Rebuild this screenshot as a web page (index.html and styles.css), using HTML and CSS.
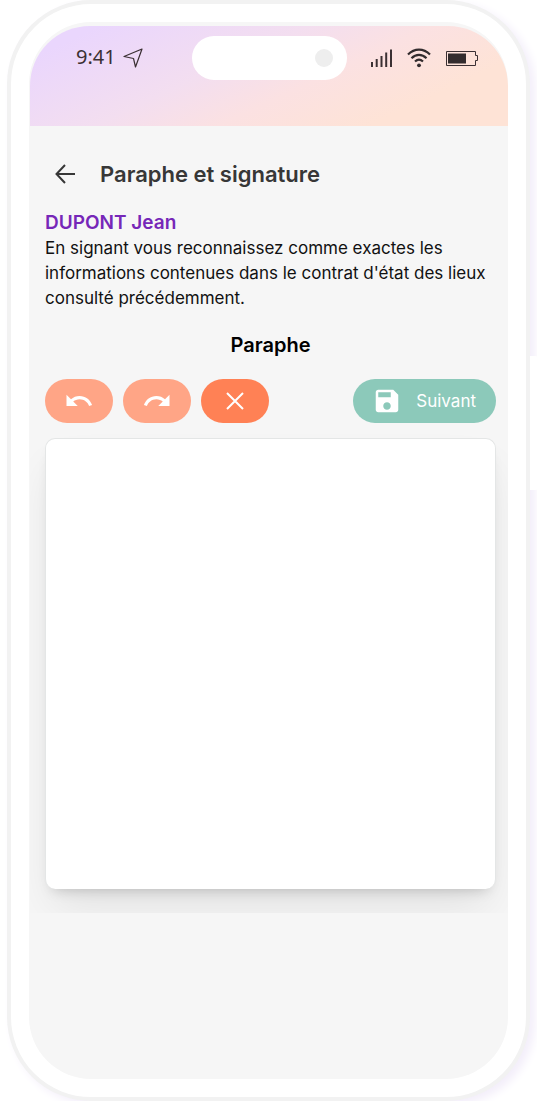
FILE: index.html
```html
<!DOCTYPE html>
<html lang="fr">

<head>
    <meta charset="UTF-8">
    <meta name="viewport" content="width=device-width, initial-scale=1.0">
    <title>Paraphe et signature</title>
    <link rel="stylesheet" href="styles.css">
</head>

<body>
    <div class="phone">
        <div class="side-key"></div>
        <div class="screen">
            <header class="status-bar">
                <div class="status-left">
                    <span class="time">9:41</span>
                    <svg width="20" height="20" viewBox="0 0 20 20" fill="none" stroke="#3b3033" stroke-width="1.2" stroke-linejoin="round">
                        <path d="M1 8.500 19 1 12.500 19 10.500 10.500Z" />
                    </svg>
                </div>
                <div class="island">
                    <div class="camera"></div>
                </div>
                <div class="status-right">
                    <svg width="22" height="20" viewBox="0 0 22 20" fill="#3b3033">
                        <path d="M0 14h2v5H0zM4.700 11h2v8h-2zM9.500 8h2v11h-2zM14.200 4.500h2V19h-2zM19 1.500h2V19h-2z" />
                    </svg>
                    <svg width="24" height="20" viewBox="0 0 24 20" fill="none" stroke="#332c2e" stroke-width="2.200">
                        <path d="M1 6.500C7.500 0 16.500 0 23 6.500M4.500 10.200c4.500-4.400 10.500-4.400 15 0M8 13.500c2.500-2.300 5.500-2.300 8 0" />
                        <circle cx="12" cy="17.300" r="1.900" fill="#332c2e" stroke="none" />
                    </svg>
                    <svg width="34" height="20" viewBox="0 0 34 20" fill="none" stroke="#3b3033">
                        <path d="M1.500 3.500h29v4h2v5h-2v5h-29z" />
                        <path d="M3 5.500h18v10H3z" fill="#332c2e" stroke="none" />
                    </svg>
                </div>
            </header>

            <main class="content">
                <div class="title-bar">
                    <button type="button" class="back" aria-label="Retour">
                        <svg width="20" height="20" viewBox="0 0 20 20" fill="none" stroke="#373737" stroke-width="2">
                            <path d="M20 10H1.500M10 1 1.500 10 10 19" />
                        </svg>
                    </button>
                    <h1>Paraphe et signature</h1>
                </div>

                <div class="signer">DUPONT Jean</div>
                <p class="notice">En signant vous reconnaissez comme exactes les informations contenues dans le contrat d'état des lieux consulté précédemment.</p>

                <h2>Paraphe</h2>

                <div class="toolbar">
                    <button type="button" class="tool" aria-label="Annuler" disabled>
                        <svg width="30" height="30" viewBox="0 0 24 24" fill="#fff">
                            <path d="M12.500 8c-2.650 0-5.050.99-6.900 2.600L2 7v9h9l-3.620-3.620c1.390-1.160 3.160-1.880 5.120-1.880 3.540 0 6.550 2.310 7.600 5.500l2.370-.78C21.080 11.030 17.150 8 12.500 8z" />
                        </svg>
                    </button>
                    <button type="button" class="tool" aria-label="Rétablir" disabled>
                        <svg width="30" height="30" viewBox="0 0 24 24" fill="#fff">
                            <path d="M18.400 10.600C16.550 8.990 14.150 8 11.500 8c-4.650 0-8.580 3.030-9.960 7.220L3.900 16c1.050-3.190 4.050-5.500 7.600-5.500 1.950 0 3.730.72 5.120 1.880L13 16h9V7l-3.600 3.600z" />
                        </svg>
                    </button>
                    <button type="button" class="tool clear" aria-label="Effacer">
                        <svg width="28" height="28" viewBox="0 0 28 28" fill="none" stroke="#fff" stroke-width="2">
                            <path d="m6 6 16 16M22 6 6 22" />
                        </svg>
                    </button>
                    <button type="button" class="next">
                        <svg width="30" height="30" viewBox="0 0 24 24" fill="#fff">
                            <path d="M17 3H5c-1.110 0-2 .9-2 2v14c0 1.100.89 2 2 2h14c1.100 0 2-.9 2-2V7l-4-4zm-5 16c-1.660 0-3-1.340-3-3s1.340-3 3-3 3 1.340 3 3-1.340 3-3 3zm3-10H5V5h10v4z" />
                        </svg>
                        Suivant
                    </button>
                </div>

                <div class="pad-wrap">
                    <canvas class="pad"></canvas>
                </div>
            </main>
        </div>
    </div>
</body>

</html>
```

FILE: styles.css
```css
* {
    margin: 0;
    padding: 0;
    box-sizing: border-box;
}

body {
    background: #fff;
    font-family: Inter, "Liberation Sans", sans-serif;
    color: #111;
    overflow-x: hidden;
}

svg {
    display: block;
    flex-shrink: 0;
}

.phone {
    position: relative;
    display: flex;
    flex-direction: column;
    min-height: 100vh;
    margin: 0 7px;
    padding: 18px;
    border: 4px solid #f2f2f2;
    border-radius: 84px;
    background: #fff;
    box-shadow: 5px 4px 10px #f3eefa;
}

/* bouton lateral du telephone */
.side-key {
    position: absolute;
    top: 352px;
    right: -12px;
    width: 8px;
    height: 134px;
    border-radius: 0 3px 3px 0;
    background: #fff;
}

.screen {
    flex: 1;
    padding: 4px 0 0 1px;
    border-radius: 62px;
    background: #f6f6f6;
    overflow: hidden;
}

.status-bar {
    display: grid;
    grid-template-columns: 1fr 155px 1fr;
    align-items: start;
    height: 100px;
    padding-top: 10px;
    border-radius: 60px 60px 0 0;
    background: linear-gradient(155deg, #ead6fd 10%, #f3def0 40%, #fbe1e2 58%, #fee3d6 80%);
}

.status-left,
.status-right {
    display: flex;
    align-items: center;
    height: 44px;
}

.status-left {
    gap: 7px;
    padding-left: 46px;
}

.status-right {
    justify-content: flex-end;
    gap: 14px;
    padding-right: 29px;
}

.time {
    font-family: "Noto Sans", sans-serif;
    font-size: 20px;
    line-height: 24px;
    padding-bottom: 2px;
    color: #3b3033;
}

.island {
    display: flex;
    align-items: center;
    justify-content: flex-end;
    height: 44px;
    padding-right: 14px;
    border-radius: 22px;
    background: #fff;
}

.camera {
    width: 18px;
    height: 18px;
    border-radius: 50%;
    background: #eee;
}

.content {
    padding: 28px 12px 0 15px;
}

.title-bar {
    display: flex;
    align-items: center;
    gap: 15px;
    height: 40px;
}

button {
    border: none;
    cursor: pointer;
    font-family: inherit;
}

.back {
    display: flex;
    align-items: center;
    justify-content: center;
    width: 40px;
    height: 40px;
    background: none;
}

h1 {
    font-size: 22px;
    font-weight: 600;
    color: #373737;
}

.signer {
    margin-top: 16px;
    line-height: 26px;
    font-size: 19px;
    font-weight: 600;
    color: #7627b8;
}

.notice {
    font-size: 17px;
    line-height: 25px;
}

h2 {
    margin-top: 22px;
    line-height: 24px;
    font-size: 20px;
    font-weight: 600;
    text-align: center;
    color: #000;
}

.toolbar {
    display: flex;
    gap: 10px;
    margin-top: 22px;
}

.tool,
.next {
    display: flex;
    align-items: center;
    justify-content: center;
    height: 44px;
    border-radius: 22px;
}

.tool {
    width: 68px;
    background: #ffa586;
}

.clear {
    background: #ff8155;
}

.next {
    gap: 14px;
    margin-left: auto;
    padding: 0 20px 0 19px;
    font-size: 17px;
    color: #fff;
    background: #8cc9ba;
}

.pad-wrap {
    margin: 0 -12px 0 -15px;
    padding: 15px 12px 24px 15px;
    overflow: hidden;
}

.pad {
    display: block;
    width: 100%;
    aspect-ratio: 1;
    border: 1px solid #e4e6e6;
    border-bottom: none;
    border-radius: 10px;
    background: #fff;
    box-shadow: 0 8px 14px -8px rgba(0, 10, 8, 0.22), 0 24px 44px -8px rgba(0, 0, 0, 0.09);
}
```
